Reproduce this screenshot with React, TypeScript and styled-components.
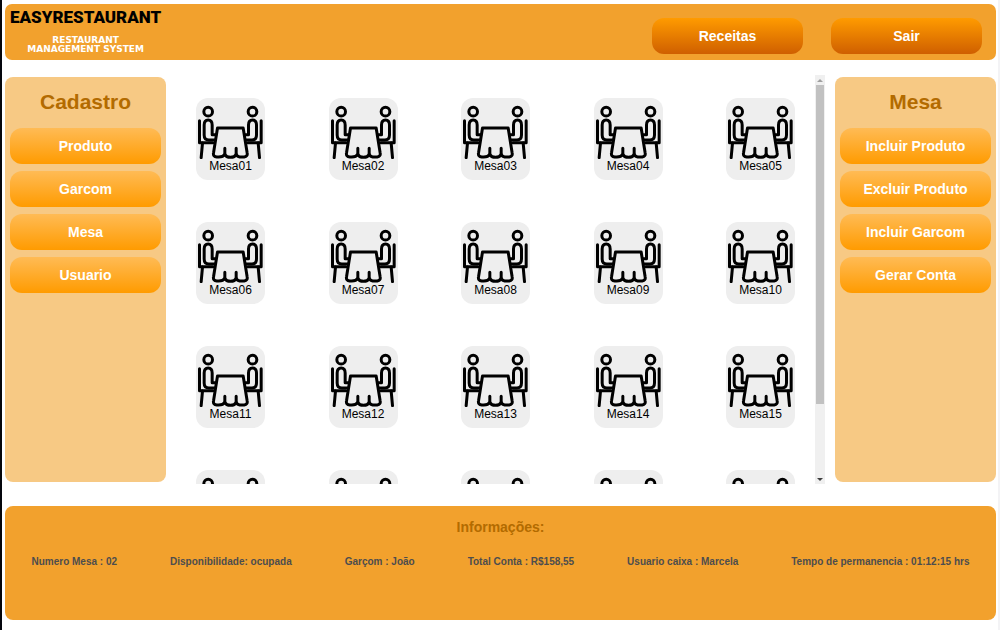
import React, { useEffect, useRef, useState } from "react";
import styled, { createGlobalStyle } from "styled-components";

const GlobalStyle = createGlobalStyle`
  *, *::before, *::after { box-sizing: border-box; }
  body {
    margin: 0;
    background: #fff;
    font-family: "Liberation Sans", Arial, sans-serif;
  }
  h1, h2, p, ul { margin: 0; padding: 0; }
`;

const Page = styled.div`
  display: flex;
  flex-direction: column;
  height: 100vh;
  min-height: 480px;
  padding: 4px 2px 10px 3px;
  border-left: 2px solid #05070d;
  border-right: 2px solid #f3f3f5;
`;

const Header = styled.header`
  display: flex;
  justify-content: space-between;
  align-items: flex-start;
  height: 56px;
  flex: none;
  padding-right: 14px;
  border-radius: 7px;
  background: #f2a12d;
`;

const Brand = styled.div`
  display: flex;
  flex-direction: column;
  align-items: center;
  padding: 1px 5px 0;
`;

const BrandName = styled.h1`
  font-family: Roboto, sans-serif;
  font-size: 17px;
  line-height: 24px;
  font-weight: 900;
  color: #000;
`;

const Tagline = styled.p`
  padding-top: 7px;
  font-family: "DejaVu Sans", sans-serif;
  font-size: 9px;
  line-height: 9px;
  font-weight: 700;
  text-align: center;
  color: #fff;
`;

const HeaderNav = styled.nav`
  display: flex;
  gap: 28px;
  padding-top: 14px;
`;

const Button = styled.button<{ $dark?: boolean }>`
  flex: none;
  min-width: 151px;
  height: 36px;
  padding: 0;
  border: 0;
  border-radius: 12px;
  background: ${(p) =>
    p.$dark
      ? "linear-gradient(#ff9b00, #cf5f00)"
      : "linear-gradient(#ffbb55, #ff9b00)"};
  color: #fff;
  font-family: inherit;
  font-size: 14px;
  font-weight: 700;
  cursor: pointer;
`;

const Middle = styled.main`
  display: flex;
  flex: 1;
  min-height: 0;
  margin: 15px 0 22px;
`;

const Panel = styled.aside`
  display: flex;
  flex-direction: column;
  gap: 7px;
  flex: none;
  width: 161px;
  margin: 2px 0;
  padding: 13px 5px;
  border-radius: 8px;
  background: #f7c984;
`;

const PanelTitle = styled.h2`
  padding-bottom: 7px;
  font-size: 21px;
  line-height: 24px;
  text-align: center;
  color: #b36b00;
`;

const TablesArea = styled.section`
  display: flex;
  flex: 1;
  min-width: 0;
  margin: 0 10px;
`;

const TablesScroll = styled.div`
  flex: 1;
  overflow-y: auto;
  scrollbar-width: none;
`;

const TablesGrid = styled.div`
  display: grid;
  grid-template-columns: repeat(5, 69px);
  justify-content: space-between;
  row-gap: 42px;
  padding: 23px 20px 21px;
`;

const TableButton = styled.button`
  display: flex;
  flex-direction: column;
  align-items: center;
  height: 82px;
  padding: 7px 0 0;
  border: 0;
  border-radius: 12px;
  background: #eee;
  color: #000;
  font-family: inherit;
  font-size: 12px;
  line-height: 14px;
  cursor: pointer;
`;

const Track = styled.div`
  display: flex;
  flex-direction: column;
  width: 10px;
  background: #f0f0f0;
`;

const Arrow = styled.button`
  display: flex;
  align-items: center;
  justify-content: center;
  flex: none;
  height: 10px;
  padding: 0;
  border: 0;
  background: transparent;
`;

const Rail = styled.div`
  flex: 1;
  min-height: 0;
`;

const Thumb = styled.div`
  margin: 0 1px;
  background: #c1c1c1;
`;

const Footer = styled.footer`
  flex: none;
  min-height: 114px;
  padding-top: 13px;
  border-radius: 8px;
  background: #f2a12d;
`;

const FooterTitle = styled.h2`
  font-size: 14px;
  line-height: 16px;
  text-align: center;
  color: #b36b00;
`;

const InfoList = styled.ul`
  display: flex;
  justify-content: space-around;
  padding-top: 20px;
  list-style: none;
`;

const InfoItem = styled.li`
  font-size: 10px;
  line-height: 14px;
  font-weight: 700;
  color: #4d4d4d;
`;

const Person = () => (
  <>
    <circle cx="54" cy="64" r="13" />
    <path d="M28 91 V157 H68" />
    <path d="M74 149 H56 Q42 149 42 134 V104 Q42 89 54 89 Q66 89 66 104 V133 H77" />
    <path d="M37 158 L33 202" />
  </>
);

const TableIcon = () => (
  <svg
    width="65"
    height="54"
    viewBox="24 44 194 162"
    fill="none"
    stroke="#000"
    strokeWidth="9"
    strokeLinecap="round"
    strokeLinejoin="round"
    aria-hidden="true"
  >
    <Person />
    <g transform="translate(241 0) scale(-1 1)">
      <Person />
    </g>
    <path d="M82 113 H159 L171 188 Q173 198 162 200 Q142 202 138 192 Q134 201 121 201 Q108 201 104 192 Q98 202 80 200 Q68 198 70 188 Z" />
    <path d="M104 192 V174 M138 192 V174" />
  </svg>
);

const tables = Array.from(
  { length: 20 },
  (_, i) => "Mesa" + String(i + 1).padStart(2, "0")
);

const info = [
  "Numero Mesa : 02",
  "Disponibilidade: ocupada",
  "Garçom : João",
  "Total Conta : R$158,55",
  "Usuario caixa : Marcela",
  "Tempo de permanencia : 01:12:15 hrs",
];

const Tables = () => {
  const ref = useRef<HTMLDivElement>(null);
  const [bar, setBar] = useState({ top: 0, size: 82 });

  const update = () => {
    const el = ref.current;
    if (!el) return;
    setBar({
      top: (el.scrollTop / el.scrollHeight) * 100,
      size: (el.clientHeight / el.scrollHeight) * 100,
    });
  };

  useEffect(() => {
    update();
    window.addEventListener("resize", update);
    return () => window.removeEventListener("resize", update);
  }, []);

  const step = (dy: number) => ref.current?.scrollBy({ top: dy });

  return (
    <TablesArea>
      <TablesScroll ref={ref} onScroll={update}>
        <TablesGrid>
          {tables.map((name) => (
            <TableButton key={name}>
              <TableIcon />
              {name}
            </TableButton>
          ))}
        </TablesGrid>
      </TablesScroll>
      <Track>
        <Arrow aria-label="Subir" onClick={() => step(-40)}>
          <svg width="6" height="3" viewBox="0 0 6 3">
            <path d="M0 3 L3 0 L6 3 Z" fill="#a0a0a0" />
          </svg>
        </Arrow>
        <Rail>
          <Thumb
            style={{ height: bar.size + "%", transform: `translateY(${(bar.top / bar.size) * 100}%)` }}
          />
        </Rail>
        <Arrow aria-label="Descer" onClick={() => step(40)}>
          <svg width="6" height="3" viewBox="0 0 6 3">
            <path d="M0 0 L3 3 L6 0 Z" fill="#404040" />
          </svg>
        </Arrow>
      </Track>
    </TablesArea>
  );
};

export default function App() {
  return (
    <>
      <GlobalStyle />
      <Page>
        <Header>
          <Brand>
            <BrandName>EASYRESTAURANT</BrandName>
            <Tagline>
              RESTAURANT
              <br />
              MANAGEMENT SYSTEM
            </Tagline>
          </Brand>
          <HeaderNav>
            <Button $dark>Receitas</Button>
            <Button $dark>Sair</Button>
          </HeaderNav>
        </Header>
        <Middle>
          <Panel>
            <PanelTitle>Cadastro</PanelTitle>
            <Button>Produto</Button>
            <Button>Garcom</Button>
            <Button>Mesa</Button>
            <Button>Usuario</Button>
          </Panel>
          <Tables />
          <Panel>
            <PanelTitle>Mesa</PanelTitle>
            <Button>Incluir Produto</Button>
            <Button>Excluir Produto</Button>
            <Button>Incluir Garcom</Button>
            <Button>Gerar Conta</Button>
          </Panel>
        </Middle>
        <Footer>
          <FooterTitle>Informações:</FooterTitle>
          <InfoList>
            {info.map((text) => (
              <InfoItem key={text}>{text}</InfoItem>
            ))}
          </InfoList>
        </Footer>
      </Page>
    </>
  );
}
